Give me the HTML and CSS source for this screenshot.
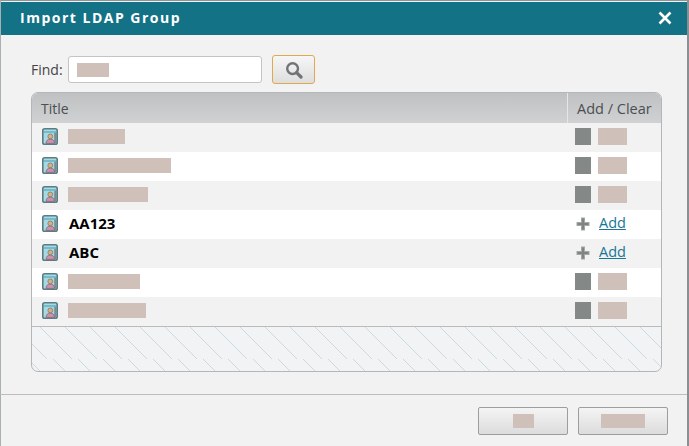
FILE: index.html
```html
<!DOCTYPE html>
<html lang="en">
<head>
<meta charset="utf-8">
<title>Import LDAP Group</title>
<link rel="stylesheet" href="styles.css">
</head>
<body>
<svg class="defs" width="0" height="0" aria-hidden="true">
  <defs>
    <symbol id="group" viewBox="0 0 16 17">
      <rect x="0.8" y="0.8" width="14.4" height="15.4" rx="1.8" fill="#a8d8e4" stroke="#5a7d84" stroke-width="1.6"/>
      <path d="M1.5 4H14.5" stroke="#3d9fb6" stroke-width="1.2"/>
      <rect x="12.2" y="4.8" width="2.4" height="10.6" fill="#7b8c94"/>
      <circle cx="8.3" cy="8.4" r="2.4" fill="#d9b080" stroke="#85775f" stroke-width=".8"/>
      <path d="M4.1 15.4c0-3.1 1.7-4.2 4.2-4.2s4.2 1.1 4.2 4.2z" fill="#cf90ac" stroke="#7d6772" stroke-width=".8"/>
    </symbol>
    <symbol id="plus" viewBox="0 0 14 14">
      <path d="M5 0.5H9V5H13.5V9H9V13.5H5V9H0.5V5H5Z" fill="#a3a7a5"/>
      <path d="M6 1.5H8V6H12.5V8H8V12.5H6V8H1.5V6H6Z" fill="#7f8482"/>
    </symbol>
    <pattern id="hatch" width="25" height="45" patternUnits="userSpaceOnUse">
      <path d="M8 0L40 32M-17 0L15 32" stroke="#ccd9de" fill="none"/>
      <path d="M21 32L34 45M-4 32L9 45" stroke="#ccd9de" fill="none"/>
    </pattern>
  </defs>
</svg>
<main class="dialog">
  <header class="titlebar">
    <h1 class="title">Import LDAP Group</h1>
    <svg class="close" viewBox="0 0 14 14" width="14" height="14" aria-label="Close"><path d="M1.5 1.5L12.5 12.5M12.5 1.5L1.5 12.5" stroke="#fff" stroke-width="2.6"/></svg>
  </header>
  <section class="content">
    <form class="find">
      <label class="find-label">Find:</label>
      <div class="find-input"><span class="mask mask-find"></span></div>
      <button class="find-btn" type="button" aria-label="Search">
        <svg viewBox="0 0 18 18" width="18" height="18"><circle cx="7.6" cy="7.6" r="5.4" fill="none" stroke="#6f7476" stroke-width="2.4"/><path d="M11.6 11.6L16 16" stroke="#6f7476" stroke-width="3.2" stroke-linecap="round"/></svg>
      </button>
    </form>
    <div class="table">
      <div class="thead">
        <div class="th th-title">Title</div>
        <div class="th th-action">Add / Clear</div>
      </div>
      <div class="row">
        <div class="cell-title"><svg class="icon"><use href="#group"/></svg><span class="mask mask-name w57"></span></div>
        <div class="cell-action"><span class="square"></span><span class="mask mask-act"></span></div>
      </div>
      <div class="row">
        <div class="cell-title"><svg class="icon"><use href="#group"/></svg><span class="mask mask-name w103"></span></div>
        <div class="cell-action"><span class="square"></span><span class="mask mask-act"></span></div>
      </div>
      <div class="row">
        <div class="cell-title"><svg class="icon"><use href="#group"/></svg><span class="mask mask-name w80"></span></div>
        <div class="cell-action"><span class="square"></span><span class="mask mask-act"></span></div>
      </div>
      <div class="row">
        <div class="cell-title"><svg class="icon"><use href="#group"/></svg><b class="name">AA123</b></div>
        <div class="cell-action"><svg class="plus"><use href="#plus"/></svg><a class="add" href="#">Add</a></div>
      </div>
      <div class="row">
        <div class="cell-title"><svg class="icon"><use href="#group"/></svg><b class="name">ABC</b></div>
        <div class="cell-action"><svg class="plus"><use href="#plus"/></svg><a class="add" href="#">Add</a></div>
      </div>
      <div class="row">
        <div class="cell-title"><svg class="icon"><use href="#group"/></svg><span class="mask mask-name w72"></span></div>
        <div class="cell-action"><span class="square"></span><span class="mask mask-act"></span></div>
      </div>
      <div class="row">
        <div class="cell-title"><svg class="icon"><use href="#group"/></svg><span class="mask mask-name w78"></span></div>
        <div class="cell-action"><span class="square"></span><span class="mask mask-act"></span></div>
      </div>
      <svg class="hatch" width="100%" height="45"><rect width="100%" height="45" fill="url(#hatch)"/></svg>
    </div>
  </section>
  <footer class="footer">
    <button class="btn" type="button"><span class="mask mask-ok"></span></button>
    <button class="btn" type="button"><span class="mask mask-cancel"></span></button>
  </footer>
</main>
</body>
</html>
```
FILE: styles.css
```css
html, body {
  margin: 0;
  padding: 0;
  background: #f2f2f2;
}
body {
  width: 689px;
  height: 446px;
  overflow: hidden;
  font-family: "Open Sans", "Liberation Sans", sans-serif;
}
.defs {
  display: block;
  height: 0;
}
.dialog {
  box-sizing: border-box;
  width: 689px;
  height: 446px;
  border-top: 1px solid #8c979b;
  border-left: 1px solid #a9b0b2;
  border-right: 2px solid #8a8f91;
  display: flex;
  flex-direction: column;
  background: #f2f2f2;
}
.titlebar {
  box-sizing: border-box;
  height: 33px;
  margin-top: 1px;
  flex: none;
  background: #147286;
  display: flex;
  align-items: center;
  justify-content: space-between;
  padding: 0 15px 2px 19px;
}
.title {
  margin: 0;
  color: #fff;
  font-size: 14px;
  font-weight: 700;
  letter-spacing: 1.5px;
}
.close {
  display: block;
}
.content {
  flex: 1;
  padding: 20px 25px 0 30px;
}
.find {
  display: flex;
  align-items: center;
  height: 29px;
  margin: 0 0 8px;
}
.find-label {
  width: 37px;
  font-size: 14px;
  color: #444;
}
.find-input {
  box-sizing: border-box;
  width: 194px;
  height: 27px;
  background: #fff;
  border: 1px solid #c4c4c4;
  border-radius: 3px;
  display: flex;
  align-items: center;
  padding-left: 8px;
}
.find-btn {
  box-sizing: border-box;
  width: 43px;
  height: 29px;
  margin-left: 10px;
  padding: 0;
  border: 1px solid #e0a94f;
  border-radius: 3px;
  background: linear-gradient(#f6f6f6, #dedede);
  display: flex;
  align-items: center;
  justify-content: center;
}
.mask {
  display: block;
  background: #cfc0ba;
}
.mask-find {
  width: 32px;
  height: 14px;
}
.table {
  box-sizing: border-box;
  width: 631px;
  height: 280px;
  border: 1px solid #b4b6b7;
  border-radius: 7px;
  overflow: hidden;
  display: flex;
  flex-direction: column;
  background: #f2f3f4;
}
.thead {
  height: 30px;
  flex: none;
  display: flex;
  background: linear-gradient(#c0c1c3, #d0d1d2);
  color: #4a4f52;
  font-size: 14px;
}
.th {
  display: flex;
  align-items: center;
}
.th-title {
  flex: 1;
  padding-left: 9px;
}
.th-action {
  width: 94px;
  box-sizing: border-box;
  padding-left: 9px;
  border-left: 1px solid #e6e6e6;
  font-size: 14.5px;
}
.row {
  height: 29px;
  flex: none;
  display: flex;
  background: #f2f2f2;
}
.row:nth-child(odd) {
  background: #fff;
}
.cell-title {
  flex: 1;
  display: flex;
  align-items: center;
  padding: 0 0 2px 10px;
}
.cell-action {
  width: 86px;
  display: flex;
  align-items: center;
  padding-bottom: 2px;
}
.icon {
  width: 16px;
  height: 17px;
  margin-right: 10px;
  flex: none;
}
.name {
  margin: 0 0 1px 1px;
  font-size: 15px;
  font-weight: 700;
  color: #000;
}
.mask-name {
  height: 15px;
}
.w57 { width: 57px; }
.w103 { width: 103px; }
.w80 { width: 80px; }
.w72 { width: 72px; }
.w78 { width: 78px; }
.square {
  width: 16px;
  height: 17px;
  background: #848987;
  margin-right: 7px;
}
.mask-act {
  width: 29px;
  height: 17px;
}
.plus {
  width: 14px;
  height: 14px;
  margin: 0 9px 0 1px;
}
.add {
  margin-bottom: 2px;
  font-size: 14.5px;
  color: #1a7596;
  text-decoration: underline;
}
.hatch {
  display: block;
  border-top: 1px solid #b9bbbc;
  box-sizing: border-box;
  flex: none;
}
.footer {
  flex: none;
  height: 52px;
  box-sizing: border-box;
  border-top: 1px solid #bdbdbd;
  margin-left: -1px;
  display: flex;
  justify-content: flex-end;
  gap: 10px;
  padding: 12px 19px 0 0;
}
.btn {
  box-sizing: border-box;
  width: 90px;
  height: 28px;
  padding: 0;
  border: 1px solid #9d9d9d;
  border-radius: 2px;
  background: linear-gradient(#f4f4f4, #dcdcdc);
  display: flex;
  align-items: center;
  justify-content: center;
}
.mask-ok {
  width: 21px;
  height: 14px;
}
.mask-cancel {
  width: 44px;
  height: 14px;
}
```
